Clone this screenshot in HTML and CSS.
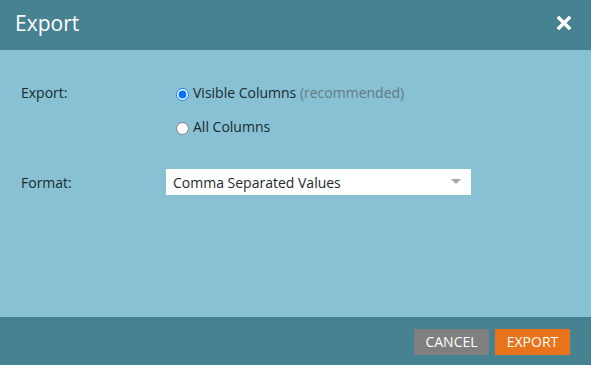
FILE: index.html
```html
<!DOCTYPE html>
<html lang="en">
<head>
  <meta charset="UTF-8">
  <title>Export</title>
  <link rel="stylesheet" href="styles.css">
</head>
<body>

<div class="dialog">
  <div class="header">
    <h1>Export</h1>
    <svg class="close" width="14" height="14" viewBox="0 0 14 14">
      <path d="M2 2 L12 12 M12 2 L2 12" stroke="#fff" stroke-width="3.4" stroke-linecap="square"/>
    </svg>
  </div>

  <div class="content">
    <div class="row">
      <div class="label">Export:</div>
      <div class="options">
        <label class="radio"><input type="radio" name="cols" checked>Visible Columns <span class="hint">(recommended)</span></label>
        <label class="radio"><input type="radio" name="cols">All Columns</label>
      </div>
    </div>
    <div class="row format">
      <div class="label">Format:</div>
      <div class="select">
        <span>Comma Separated Values</span>
        <span class="arrow"></span>
      </div>
    </div>
  </div>

  <div class="footer">
    <button class="btn cancel">CANCEL</button>
    <button class="btn export">EXPORT</button>
  </div>
</div>

</body>
</html>
```

FILE: styles.css
```css
body {
  margin: 0;
  font-family: "Open Sans", Arial, sans-serif;
  background-color: #87c1d3;
}
.dialog {
  width: 591px;
  height: 365px;
  display: flex;
  flex-direction: column;
}
.header {
  height: 50px;
  background-color: #478293;
  display: flex;
  align-items: center;
  justify-content: space-between;
  padding: 0 20px 0 15px;
}
.header h1 {
  margin: 0;
  font-size: 21px;
  font-weight: normal;
  color: #fff;
  position: relative;
  top: -2px;
}
.close {
  position: relative;
  top: -2px;
}
.content {
  flex: 1;
  padding: 33px 0 0 21px;
  color: #1c2a2e;
  font-size: 14px;
}
.row {
  display: flex;
}
.label {
  width: 154px;
  line-height: 19px;
}
.options {
  display: flex;
  flex-direction: column;
  gap: 15px;
}
.radio {
  display: flex;
  align-items: center;
  line-height: 19px;
  white-space: pre;
}
.radio input {
  margin: 4px 4px 0 1px;
  width: 13px;
  height: 13px;
}
.hint {
  color: #637a82;
}
.format {
  margin-top: 33px;
  align-items: center;
}
.format .label {
  width: 145px;
}
.select {
  width: 305px;
  height: 26px;
  background-color: #fff;
  display: flex;
  align-items: center;
  justify-content: space-between;
  padding: 0 10px 0 7px;
  box-sizing: border-box;
  font-size: 14px;
  color: #1c2a2e;
}
.arrow {
  width: 0;
  height: 0;
  border-left: 5px solid transparent;
  border-right: 5px solid transparent;
  border-top: 5px solid #a8a8a8;
  margin-top: -2px;
}
.footer {
  height: 48px;
  background-color: #478293;
  display: flex;
  justify-content: flex-end;
  align-items: center;
  gap: 6px;
  padding-right: 21px;
}
.btn {
  height: 26px;
  border: none;
  color: #fff;
  font-family: "Open Sans", Arial, sans-serif;
  font-size: 14px;
  padding: 0;
  cursor: pointer;
  margin-top: 1px;
}
.cancel {
  width: 75px;
  background-color: #7f7f7f;
}
.export {
  width: 75px;
  background-color: #e8731a;
}
```
